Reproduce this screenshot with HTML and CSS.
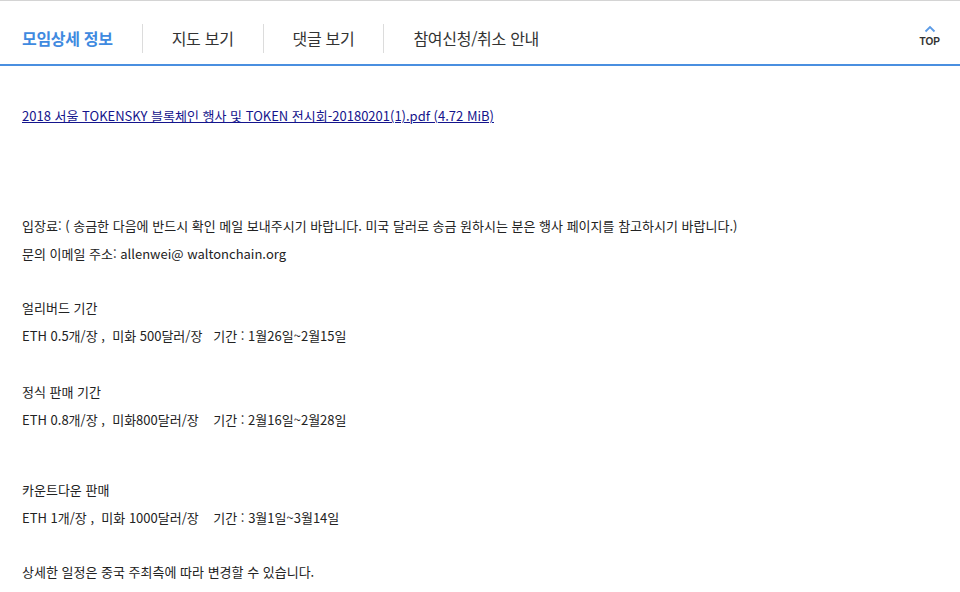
FILE: index.html
```html
<!DOCTYPE html>
<html lang="ko">
<head>
<meta charset="utf-8">
<link rel="stylesheet" href="styles.css">
</head>
<body>
<header class="tabs">
  <nav class="tab-list">
    <a class="tab active">모임상세 정보</a>
    <a class="tab">지도 보기</a>
    <a class="tab">댓글 보기</a>
    <a class="tab last">참여신청/취소 안내</a>
  </nav>
  <a class="top">
    <svg width="12" height="8" viewBox="0 0 12 8"><path d="M1.5 6.5 L6 2 L10.5 6.5" fill="none" stroke="#5b9be6" stroke-width="1.8"/></svg>
    <span>TOP</span>
  </a>
</header>
<main class="content">
  <div class="line"><a class="file" href="#">2018 서울 TOKENSKY 블록체인 행사 및 TOKEN 전시회-20180201(1).pdf (4.72 MiB)</a></div>
  <div class="gap4"></div>
  <div class="line">입장료: ( 송금한 다음에 반드시 확인 메일 보내주시기 바랍니다. 미국 달러로 송금 원하시는 분은 행사 페이지를 참고하시기 바랍니다.)</div>
  <div class="line">문의 이메일 주소: allenwei@ waltonchain.org</div>
  <div class="gap-a"></div>
  <div class="line">얼리버드 기간</div>
  <div class="line">ETH 0.5개/장 ,&nbsp; 미화 500달러/장 &nbsp; 기간 : 1월26일~2월15일</div>
  <div class="gap-b"></div>
  <div class="line">정식 판매 기간</div>
  <div class="line">ETH 0.8개/장 , &nbsp;미화800달러/장 &nbsp; &nbsp;기간 : 2월16일~2월28일</div>
  <div class="gap-c"></div>
  <div class="line">카운트다운 판매</div>
  <div class="line">ETH 1개/장 , &nbsp;미화 1000달러/장 &nbsp; &nbsp;기간 : 3월1일~3월14일</div>
  <div class="gap-a"></div>
  <div class="line">상세한 일정은 중국 주최측에 따라 변경할 수 있습니다.</div>
</main>
</body>
</html>
```
FILE: styles.css
```css
html, body {
  margin: 0;
  padding: 0;
  background: #fff;
}
body {
  font-family: "Noto Sans CJK KR", "Noto Sans", sans-serif;
  color: #222;
  border-top: 1px solid #d4d4d4;
}
.tabs {
  height: 65px;
  box-sizing: border-box;
  border-bottom: 2px solid #4a8fe0;
  display: flex;
  align-items: flex-start;
  justify-content: space-between;
}
.tab-list {
  display: flex;
  align-items: center;
  padding-left: 22px;
  padding-top: 23px;
}
.tab {
  font-size: 16px;
  color: #333;
  padding: 0 29px;
  line-height: 29px;
  border-right: 1px solid #dcdcdc;
  letter-spacing: -0.3px;
}
.tab:first-child { padding-left: 0; }
.tab.last { border-right: none; }
.tab.active {
  color: #3f8ae0;
  font-weight: bold;
}
.top {
  display: flex;
  flex-direction: column;
  align-items: center;
  margin-right: 20px;
  margin-top: 24px;
  font-family: "Liberation Sans", Arial, sans-serif;
  font-size: 10px;
  font-weight: bold;
  color: #333;
  gap: 3px;
}
.content {
  padding: 0 22px;
  padding-top: 36px;
  font-size: 13px;
}
.line {
  height: 28px;
  line-height: 28px;
  white-space: nowrap;
}
.file {
  color: #14148c;
  text-decoration: underline;
}
.gap-a { height: 26px; }
.gap-b { height: 28px; }
.gap-c { height: 42px; }
.gap4 { height: 82px; }
```
